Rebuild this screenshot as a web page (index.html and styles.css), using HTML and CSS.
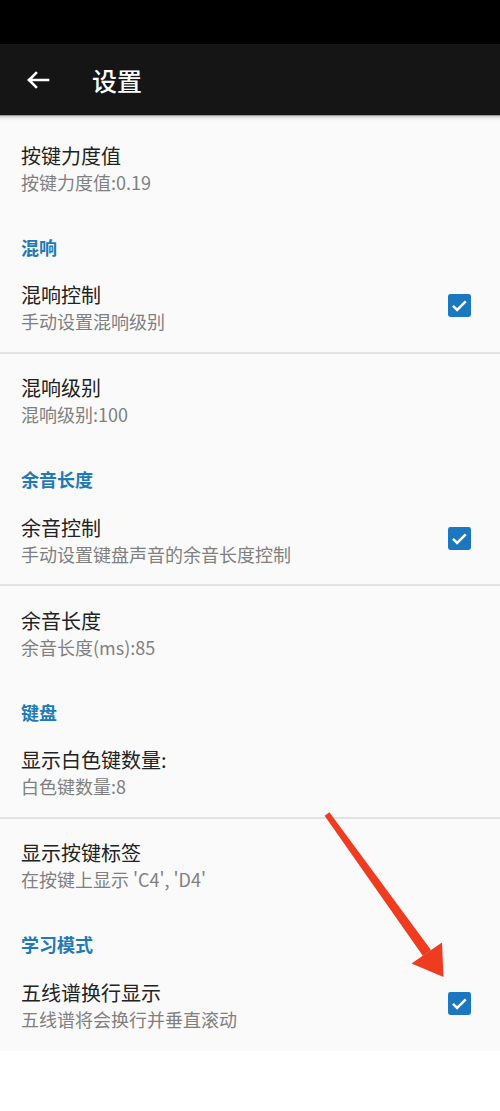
FILE: index.html
```html
<!DOCTYPE html>
<html lang="zh-CN">
<head>
<meta charset="utf-8">
<title>设置</title>
<link rel="stylesheet" href="styles.css">
</head>
<body>
<div class="status"></div>
<header class="toolbar">
  <svg class="back" width="30" height="30" viewBox="0 0 30 30"><path d="M27 15H8M15 8l-7 7 7 7" fill="none" stroke="#fff" stroke-width="2.6" stroke-linecap="square"/></svg>
  <h1 class="title">设置</h1>
</header>
<main class="list">
  <div class="shadow"></div>
  <div class="pref">
    <div class="text"><div class="pt">按键力度值</div><div class="ps">按键力度值:0.19</div></div>
  </div>
  <div class="cat">混响</div>
  <div class="pref div">
    <div class="text"><div class="pt">混响控制</div><div class="ps">手动设置混响级别</div></div>
    <svg class="cb" viewBox="0 0 24 24"><rect x="0" y="0" width="24" height="24" rx="2.5" fill="#1b77c0"/><path d="M5.2 12.4l4.3 4.3 9-9" fill="none" stroke="#fff" stroke-width="2.6"/></svg>
  </div>
  <div class="pref">
    <div class="text"><div class="pt">混响级别</div><div class="ps">混响级别:100</div></div>
  </div>
  <div class="cat">余音长度</div>
  <div class="pref div">
    <div class="text"><div class="pt">余音控制</div><div class="ps">手动设置键盘声音的余音长度控制</div></div>
    <svg class="cb" viewBox="0 0 24 24"><rect x="0" y="0" width="24" height="24" rx="2.5" fill="#1b77c0"/><path d="M5.2 12.4l4.3 4.3 9-9" fill="none" stroke="#fff" stroke-width="2.6"/></svg>
  </div>
  <div class="pref">
    <div class="text"><div class="pt">余音长度</div><div class="ps">余音长度(ms):85</div></div>
  </div>
  <div class="cat">键盘</div>
  <div class="pref div">
    <div class="text"><div class="pt">显示白色键数量:</div><div class="ps">白色键数量:8</div></div>
  </div>
  <div class="pref">
    <div class="text"><div class="pt">显示按键标签</div><div class="ps">在按键上显示 'C4', 'D4'</div></div>
  </div>
  <div class="cat">学习模式</div>
  <div class="pref">
    <div class="text"><div class="pt">五线谱换行显示</div><div class="ps">五线谱将会换行并垂直滚动</div></div>
    <svg class="cb" viewBox="0 0 24 24"><rect x="0" y="0" width="24" height="24" rx="2.5" fill="#1b77c0"/><path d="M5.2 12.4l4.3 4.3 9-9" fill="none" stroke="#fff" stroke-width="2.6"/></svg>
  </div>
</main>
<svg class="annot" width="500" height="1111" viewBox="0 0 500 1111">
  <polygon points="329.4,812.2 324.6,815.8 423,956 431,950" fill="#ef3b1f"/>
  <polygon points="411.5,963.5 442,942.5 443.5,977" fill="#ef3b1f"/>
</svg>
</body>
</html>
```
FILE: styles.css
```css
* { box-sizing: border-box; }
html, body { margin: 0; padding: 0; }
body {
  width: 500px;
  min-height: 1111px;
  background: #ffffff;
  font-family: "Noto Sans CJK SC", "Noto Sans", sans-serif;
  position: relative;
  overflow: hidden;
}
.status { height: 44px; background: #000; }
.toolbar {
  height: 71px;
  background: #151515;
  display: flex;
  align-items: center;
  padding-left: 21px;
}
.back { display: block; flex: none; }
.title {
  margin: 0 0 0 41px;
  color: #fff;
  font-size: 25px;
  font-weight: 500;
  line-height: 30px;
}
.list { background: #fafafa; }
.shadow {
  height: 6px;
  background: linear-gradient(#7c7c7c 0, #d6d6d6 1.5px, #e8e8e8 3px, #f4f4f4 4.5px, #fafafa 6px);
}
.pref {
  height: 93px;
  display: flex;
  align-items: center;
  padding: 20.5px 29px 20.5px 21px;
}
.pref.div { border-bottom: 2px solid #e2e2e2; padding-bottom: 18.5px; }
.text { flex: 1; }
.pt { font-size: 20px; line-height: 28px; color: #222; }
.ps { font-size: 18px; line-height: 24px; color: #808080; }
.cb { width: 23px; height: 23px; flex: none; display: block; margin-top: -3px; }
.cat {
  height: 46.5px;
  padding: 20.5px 21px 2px;
  font-size: 18px;
  line-height: 24px;
  font-weight: 700;
  color: #1f7bb5;
}
.annot { position: absolute; left: 0; top: 0; pointer-events: none; }
```
